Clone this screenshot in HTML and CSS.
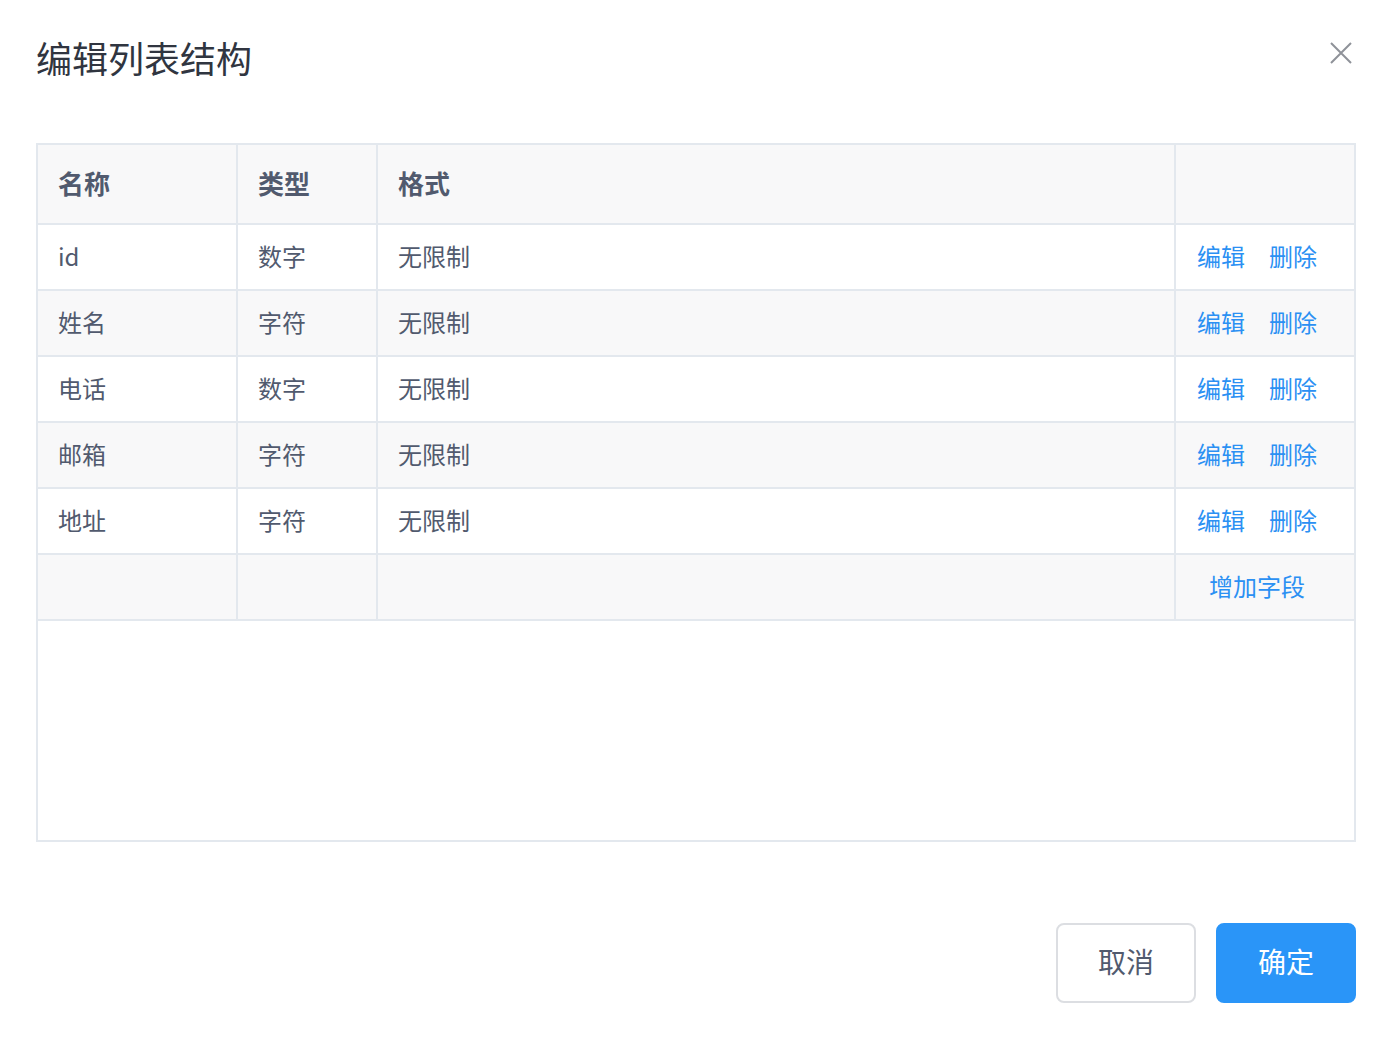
FILE: index.html
```html
<!DOCTYPE html>
<html lang="zh-CN">
<head>
  <meta charset="UTF-8">
  <meta name="viewport" content="width=device-width, initial-scale=1.0">
  <title>编辑列表结构</title>
  <link rel="stylesheet" href="styles.css">
</head>
<body>
  <div class="modal">
    <div class="modal-header">
      <h1>编辑列表结构</h1>
      <a class="close" href="#" title="关闭">
        <svg width="24" height="24" viewBox="0 0 24 24"><path d="M2 2 L22 22 M22 2 L2 22" stroke="#8f9299" stroke-width="2" fill="none"/></svg>
      </a>
    </div>

    <div class="table">
      <div class="row head">
        <div class="cell">名称</div>
        <div class="cell">类型</div>
        <div class="cell">格式</div>
        <div class="cell"></div>
      </div>
      <div class="row">
        <div class="cell">id</div>
        <div class="cell">数字</div>
        <div class="cell">无限制</div>
        <div class="cell actions"><a href="#">编辑</a><a href="#">删除</a></div>
      </div>
      <div class="row stripe">
        <div class="cell">姓名</div>
        <div class="cell">字符</div>
        <div class="cell">无限制</div>
        <div class="cell actions"><a href="#">编辑</a><a href="#">删除</a></div>
      </div>
      <div class="row">
        <div class="cell">电话</div>
        <div class="cell">数字</div>
        <div class="cell">无限制</div>
        <div class="cell actions"><a href="#">编辑</a><a href="#">删除</a></div>
      </div>
      <div class="row stripe">
        <div class="cell">邮箱</div>
        <div class="cell">字符</div>
        <div class="cell">无限制</div>
        <div class="cell actions"><a href="#">编辑</a><a href="#">删除</a></div>
      </div>
      <div class="row">
        <div class="cell">地址</div>
        <div class="cell">字符</div>
        <div class="cell">无限制</div>
        <div class="cell actions"><a href="#">编辑</a><a href="#">删除</a></div>
      </div>
      <div class="row stripe">
        <div class="cell"></div>
        <div class="cell"></div>
        <div class="cell"></div>
        <div class="cell actions"><a href="#">增加字段</a></div>
      </div>
    </div>

    <div class="modal-footer">
      <button class="btn">取消</button>
      <button class="btn btn-primary">确定</button>
    </div>
  </div>
</body>
</html>
```

FILE: styles.css
```css
body {
  margin: 0;
  background: #fff;
  font-family: "Noto Sans CJK SC", "Noto Sans", sans-serif;
  color: #515a6e;
}
.modal {
  width: 1320px;
  margin-left: 36px;
}
.modal-header {
  height: 143px;
  display: flex;
  justify-content: space-between;
  align-items: flex-start;
}
h1 {
  margin: 30px 0 0;
  font-size: 36px;
  font-weight: 400;
  line-height: 54px;
  color: #303540;
}
.close {
  margin: 41px 3px 0 0;
  display: block;
  line-height: 0;
}
.table {
  height: 699px;
  box-sizing: border-box;
  border: 2px solid #e3e8ee;
}
.row {
  display: grid;
  grid-template-columns: 200px 140px 798px 1fr;
  height: 66px;
  border-bottom: 2px solid #e3e8ee;
  box-sizing: border-box;
  background: #fff;
}
.row.head {
  height: 80px;
  background: #f8f8f9;
  font-weight: 700;
}
.row.head .cell {
  font-size: 26px;
}
.row.stripe {
  background: #f8f8f9;
}
.cell {
  display: flex;
  align-items: center;
  padding: 0 0 4px 20px;
  font-size: 24px;
  border-right: 2px solid #e3e8ee;
}
.cell:last-child {
  border-right: none;
}
.cell.actions {
  padding-left: 0;
  padding-right: 16px;
  justify-content: center;
  gap: 24px;
}
.cell a {
  color: #2b90f3;
  text-decoration: none;
}
.modal-footer {
  display: flex;
  justify-content: flex-end;
  gap: 20px;
  margin-top: 81px;
}
.btn {
  width: 140px;
  height: 80px;
  border: 2px solid #dcdee2;
  border-radius: 8px;
  background: #fff;
  font-family: inherit;
  font-size: 28px;
  color: #515a6e;
  padding-bottom: 5px;
  cursor: pointer;
}
.btn-primary {
  background: #2a95f8;
  border-color: #2a95f8;
  color: #fff;
}
```
